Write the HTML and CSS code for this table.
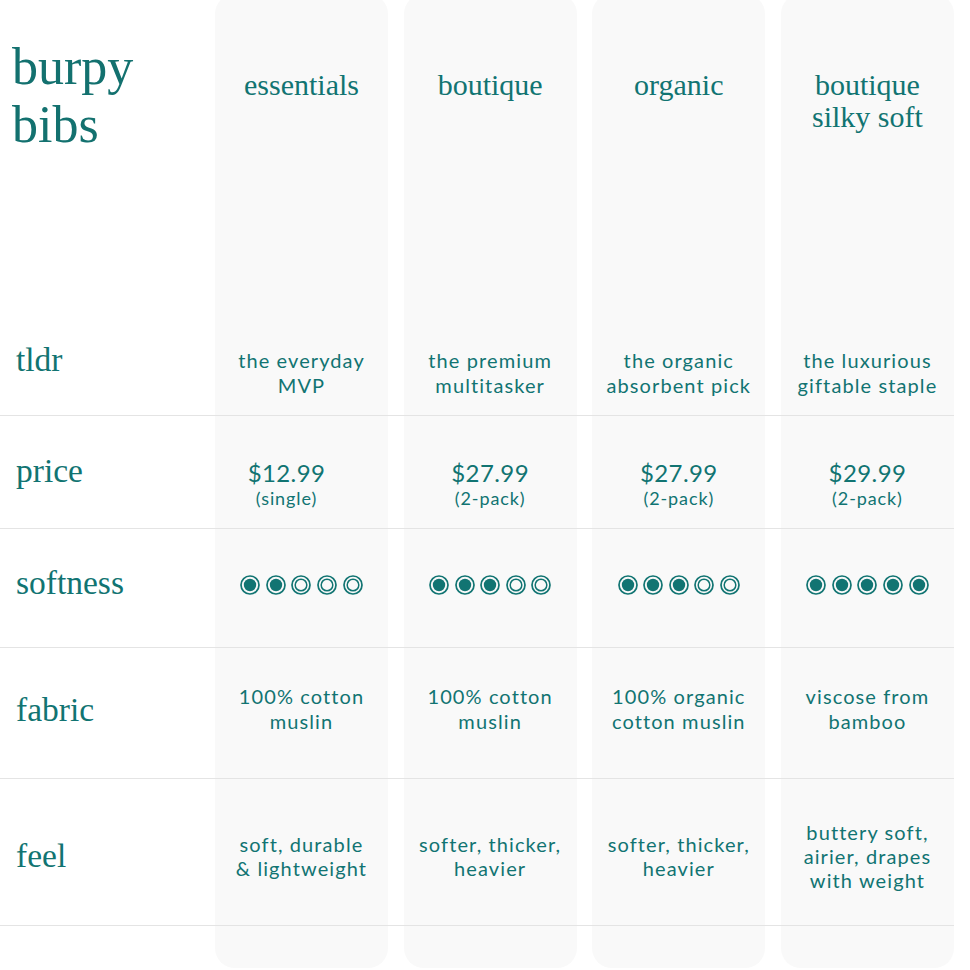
FILE: index.html
```html
<!DOCTYPE html>
<html lang="en">
<head>
<meta charset="utf-8">
<title>burpy bibs comparison</title>
<link rel="stylesheet" href="styles.css">
</head>
<body>
<main class="compare">
  <h1 class="label title">burpy<br>bibs</h1>
  <div class="prod head">essentials</div>
  <div class="prod head">boutique</div>
  <div class="prod head">organic</div>
  <div class="prod head">boutique<br>silky soft</div>

  <div class="label row-tldr">tldr</div>
  <div class="prod body row-tldr">the everyday<br>MVP</div>
  <div class="prod body row-tldr">the premium<br>multitasker</div>
  <div class="prod body row-tldr">the organic<br>absorbent pick</div>
  <div class="prod body row-tldr">the luxurious<br>giftable staple</div>
  <div class="rule"></div>

  <div class="label row-price">price</div>
  <div class="prod row-price shift"><span class="price-main">$12.99</span><span class="price-sub">(single)</span></div>
  <div class="prod row-price"><span class="price-main">$27.99</span><span class="price-sub">(2-pack)</span></div>
  <div class="prod row-price"><span class="price-main">$27.99</span><span class="price-sub">(2-pack)</span></div>
  <div class="prod row-price"><span class="price-main">$29.99</span><span class="price-sub">(2-pack)</span></div>
  <div class="rule"></div>

  <div class="label row-soft">softness</div>
  <div class="prod row-soft"><div class="dots">
    <svg class="dot" viewBox="0 0 20 20"><circle cx="10" cy="10" r="9" fill="none" stroke="currentColor" stroke-width="1.7"/><circle cx="10" cy="10" r="6.2" fill="currentColor"/></svg>
    <svg class="dot" viewBox="0 0 20 20"><circle cx="10" cy="10" r="9" fill="none" stroke="currentColor" stroke-width="1.7"/><circle cx="10" cy="10" r="6.2" fill="currentColor"/></svg>
    <svg class="dot" viewBox="0 0 20 20"><circle cx="10" cy="10" r="9" fill="none" stroke="currentColor" stroke-width="1.7"/><circle cx="10" cy="10" r="5.8" fill="none" stroke="currentColor" stroke-width="1.5"/></svg>
    <svg class="dot" viewBox="0 0 20 20"><circle cx="10" cy="10" r="9" fill="none" stroke="currentColor" stroke-width="1.7"/><circle cx="10" cy="10" r="5.8" fill="none" stroke="currentColor" stroke-width="1.5"/></svg>
    <svg class="dot" viewBox="0 0 20 20"><circle cx="10" cy="10" r="9" fill="none" stroke="currentColor" stroke-width="1.7"/><circle cx="10" cy="10" r="5.8" fill="none" stroke="currentColor" stroke-width="1.5"/></svg>
  </div></div>
  <div class="prod row-soft"><div class="dots">
    <svg class="dot" viewBox="0 0 20 20"><circle cx="10" cy="10" r="9" fill="none" stroke="currentColor" stroke-width="1.7"/><circle cx="10" cy="10" r="6.2" fill="currentColor"/></svg>
    <svg class="dot" viewBox="0 0 20 20"><circle cx="10" cy="10" r="9" fill="none" stroke="currentColor" stroke-width="1.7"/><circle cx="10" cy="10" r="6.2" fill="currentColor"/></svg>
    <svg class="dot" viewBox="0 0 20 20"><circle cx="10" cy="10" r="9" fill="none" stroke="currentColor" stroke-width="1.7"/><circle cx="10" cy="10" r="6.2" fill="currentColor"/></svg>
    <svg class="dot" viewBox="0 0 20 20"><circle cx="10" cy="10" r="9" fill="none" stroke="currentColor" stroke-width="1.7"/><circle cx="10" cy="10" r="5.8" fill="none" stroke="currentColor" stroke-width="1.5"/></svg>
    <svg class="dot" viewBox="0 0 20 20"><circle cx="10" cy="10" r="9" fill="none" stroke="currentColor" stroke-width="1.7"/><circle cx="10" cy="10" r="5.8" fill="none" stroke="currentColor" stroke-width="1.5"/></svg>
  </div></div>
  <div class="prod row-soft"><div class="dots">
    <svg class="dot" viewBox="0 0 20 20"><circle cx="10" cy="10" r="9" fill="none" stroke="currentColor" stroke-width="1.7"/><circle cx="10" cy="10" r="6.2" fill="currentColor"/></svg>
    <svg class="dot" viewBox="0 0 20 20"><circle cx="10" cy="10" r="9" fill="none" stroke="currentColor" stroke-width="1.7"/><circle cx="10" cy="10" r="6.2" fill="currentColor"/></svg>
    <svg class="dot" viewBox="0 0 20 20"><circle cx="10" cy="10" r="9" fill="none" stroke="currentColor" stroke-width="1.7"/><circle cx="10" cy="10" r="6.2" fill="currentColor"/></svg>
    <svg class="dot" viewBox="0 0 20 20"><circle cx="10" cy="10" r="9" fill="none" stroke="currentColor" stroke-width="1.7"/><circle cx="10" cy="10" r="5.8" fill="none" stroke="currentColor" stroke-width="1.5"/></svg>
    <svg class="dot" viewBox="0 0 20 20"><circle cx="10" cy="10" r="9" fill="none" stroke="currentColor" stroke-width="1.7"/><circle cx="10" cy="10" r="5.8" fill="none" stroke="currentColor" stroke-width="1.5"/></svg>
  </div></div>
  <div class="prod row-soft"><div class="dots">
    <svg class="dot" viewBox="0 0 20 20"><circle cx="10" cy="10" r="9" fill="none" stroke="currentColor" stroke-width="1.7"/><circle cx="10" cy="10" r="6.2" fill="currentColor"/></svg>
    <svg class="dot" viewBox="0 0 20 20"><circle cx="10" cy="10" r="9" fill="none" stroke="currentColor" stroke-width="1.7"/><circle cx="10" cy="10" r="6.2" fill="currentColor"/></svg>
    <svg class="dot" viewBox="0 0 20 20"><circle cx="10" cy="10" r="9" fill="none" stroke="currentColor" stroke-width="1.7"/><circle cx="10" cy="10" r="6.2" fill="currentColor"/></svg>
    <svg class="dot" viewBox="0 0 20 20"><circle cx="10" cy="10" r="9" fill="none" stroke="currentColor" stroke-width="1.7"/><circle cx="10" cy="10" r="6.2" fill="currentColor"/></svg>
    <svg class="dot" viewBox="0 0 20 20"><circle cx="10" cy="10" r="9" fill="none" stroke="currentColor" stroke-width="1.7"/><circle cx="10" cy="10" r="6.2" fill="currentColor"/></svg>
  </div></div>
  <div class="rule"></div>

  <div class="label row-fabric">fabric</div>
  <div class="prod body row-fabric">100% cotton<br>muslin</div>
  <div class="prod body row-fabric">100% cotton<br>muslin</div>
  <div class="prod body row-fabric">100% organic<br>cotton muslin</div>
  <div class="prod body row-fabric">viscose from<br>bamboo</div>
  <div class="rule"></div>

  <div class="label row-feel">feel</div>
  <div class="prod body row-feel">soft, durable<br>&amp; lightweight</div>
  <div class="prod body row-feel">softer, thicker,<br>heavier</div>
  <div class="prod body row-feel">softer, thicker,<br>heavier</div>
  <div class="prod body row-feel">buttery soft,<br>airier, drapes<br>with weight</div>
  <div class="rule"></div>

  <div class="label tail"></div>
  <div class="prod tail"></div>
  <div class="prod tail"></div>
  <div class="prod tail"></div>
  <div class="prod tail"></div>
</main>
</body>
</html>
```

FILE: styles.css
```css
html, body {
  margin: 0;
  padding: 0;
  background: #ffffff;
}

body {
  overflow: hidden;
}

.compare {
  display: grid;
  grid-template-columns: 199.33px repeat(4, 173px);
  grid-template-rows: 326px 95px 1px 112px 1px 118px 1px 130px 1px 146px 1px 42px;
  column-gap: 15.67px;
  width: 954px;
  margin-top: -6px;
  color: #117472;
  font-family: Lato, "Open Sans", sans-serif;
}

.label {
  margin: 0;
  padding-left: 16px;
  font-family: "Liberation Serif", "Times New Roman", serif;
  font-weight: 400;
  font-size: 33.5px;
  line-height: 36px;
}

.title {
  padding-top: 44px;
  padding-left: 12px;
  font-size: 52px;
  line-height: 58px;
  color: #13716f;
}

.prod {
  background: #f9f9f9;
  display: flex;
  flex-direction: column;
  align-items: center;
  text-align: center;
}

.head {
  border-radius: 20px 20px 0 0;
  padding-top: 75px;
  font-family: "Liberation Serif", "Times New Roman", serif;
  font-size: 30px;
  line-height: 32px;
}

.body {
  font-size: 20px;
  line-height: 25px;
  letter-spacing: 1.1px;
}

.rule {
  grid-column: 1 / -1;
  background: #e4e4e4;
}

.label.row-tldr { padding-top: 22px; }
.prod.row-tldr { padding-top: 28px; }

.label.row-price { padding-top: 37px; }
.prod.row-price { padding-top: 43px; }
.prod.shift { padding-right: 30px; }

.price-main {
  font-size: 24px;
  line-height: 28px;
  letter-spacing: 0.4px;
}

.price-sub {
  font-size: 18px;
  line-height: 22px;
  letter-spacing: 0.9px;
}

.label.row-soft { padding-top: 36px; }
.prod.row-soft { padding-top: 46px; }

.dots {
  display: flex;
  gap: 5.6px;
}

.dot {
  display: block;
  width: 20px;
  height: 20px;
}

.label.row-fabric { padding-top: 44px; }
.prod.row-fabric { padding-top: 36px; }

.row-feel {
  display: flex;
  flex-direction: column;
  justify-content: center;
  padding-top: 7px;
}

.body.row-feel {
  line-height: 24px;
}

.prod.tail {
  border-radius: 0 0 20px 20px;
}
```
